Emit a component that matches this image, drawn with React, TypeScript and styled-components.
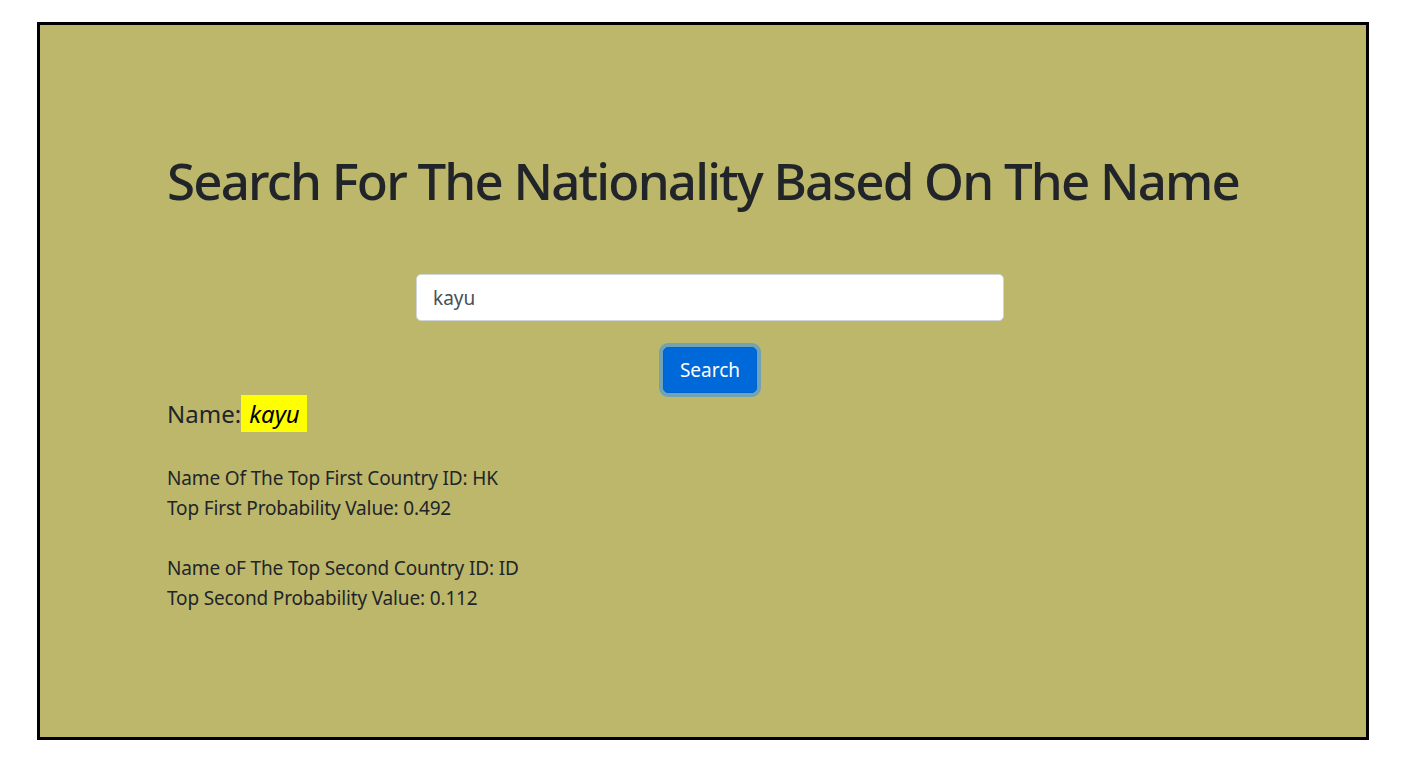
import React from "react";
import styled, { createGlobalStyle } from "styled-components";

const Global = createGlobalStyle`
  html, body { margin: 0; padding: 0; background: #ffffff; }
  body {
    font-family: "Noto Sans", "Open Sans", sans-serif;
    color: #212529;
  }
  * { box-sizing: border-box; }
`;

const Frame = styled.main`
  margin: 22px 37px 0 37px;
  height: 718px;
  border: 3px solid #000000;
  background: #bdb76b;
  display: flex;
  flex-direction: column;
  padding: 122px 127px 0 127px;
`;

const Title = styled.h1`
  margin: 0;
  font-size: 51px;
  font-weight: 500;
  letter-spacing: -1.8px;
  line-height: 67px;
  white-space: nowrap;
  text-align: center;
  color: #212529;
`;

const Form = styled.form`
  display: flex;
  flex-direction: column;
  align-items: center;
  gap: 26px;
  margin-top: 60px;
  padding-left: 14px;
`;

const Input = styled.input`
  width: 588px;
  height: 47px;
  padding: 0 16px;
  font-family: inherit;
  font-size: 19px;
  color: #495057;
  background: #ffffff;
  border: 1px solid #ced4da;
  border-radius: 5px;
  outline: none;
`;

const Button = styled.button`
  height: 46px;
  padding: 0 16px;
  font-family: inherit;
  font-size: 19px;
  color: #ffffff;
  background: #0069d9;
  border: 1px solid #0062cc;
  border-radius: 5px;
  box-shadow: 0 0 0 4px rgba(38, 143, 255, 0.5);
  cursor: pointer;
`;

const NameLine = styled.div`
  margin-top: 2px;
  font-size: 24px;
  line-height: 37px;
  display: flex;
  align-items: center;
`;

const Highlight = styled.span`
  display: inline-block;
  height: 37px;
  padding: 0 7px 0 8px;
  background: #ffff00;
  color: #000000;
  font-style: italic;
`;

const Results = styled.div`
  margin-top: 31px;
  display: flex;
  flex-direction: column;
  gap: 30px;
`;

const Group = styled.div`
  font-size: 19px;
  letter-spacing: -0.15px;
  line-height: 30px;
`;

const Line = styled.div``;

export default function App() {
  return (
    <>
      <Global />
      <Frame>
        <Title>Search For The Nationality Based On The Name</Title>
        <Form onSubmit={(e) => e.preventDefault()}>
          <Input defaultValue="kayu" />
          <Button type="submit">Search</Button>
        </Form>
        <NameLine>
          Name:<Highlight>kayu</Highlight>
        </NameLine>
        <Results>
          <Group>
            <Line>Name Of The Top First Country ID: HK</Line>
            <Line>Top First Probability Value: 0.492</Line>
          </Group>
          <Group>
            <Line>Name oF The Top Second Country ID: ID</Line>
            <Line>Top Second Probability Value: 0.112</Line>
          </Group>
        </Results>
      </Frame>
    </>
  );
}
